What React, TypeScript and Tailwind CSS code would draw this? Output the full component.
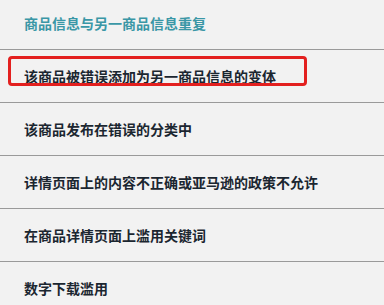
import React from "react";

const items = [
  "该商品被错误添加为另一商品信息的变体",
  "该商品发布在错误的分类中",
  "详情页面上的内容不正确或亚马逊的政策不允许",
  "在商品详情页面上滥用关键词",
  "数字下载滥用",
];

export default function App() {
  return (
    <div
      className="w-[384px] h-[305px] overflow-hidden bg-[#f2f2f2]"
      style={{ fontFamily: '"Microsoft YaHei", "Noto Sans CJK SC", sans-serif' }}
    >
      <div className="h-[50px] border-b border-[#9a9a9a] pl-6 pt-[10px]">
        <span className="text-[14px] leading-[20px] font-bold text-[#3a97a6]">
          商品信息与另一商品信息重复
        </span>
      </div>
      {items.map((t, i) => (
        <div
          key={i}
          className="relative h-[53px] border-b border-[#9a9a9a] pl-6 pt-[13px]"
        >
          <span className="text-[14px] leading-[20px] font-bold text-[#1b2630]">{t}</span>
          {i === 0 && (
            <div className="absolute left-2 top-[6px] w-[299px] h-[30px] border-[3px] border-[#e3201f] rounded-[4px]" />
          )}
        </div>
      ))}
    </div>
  );
}
